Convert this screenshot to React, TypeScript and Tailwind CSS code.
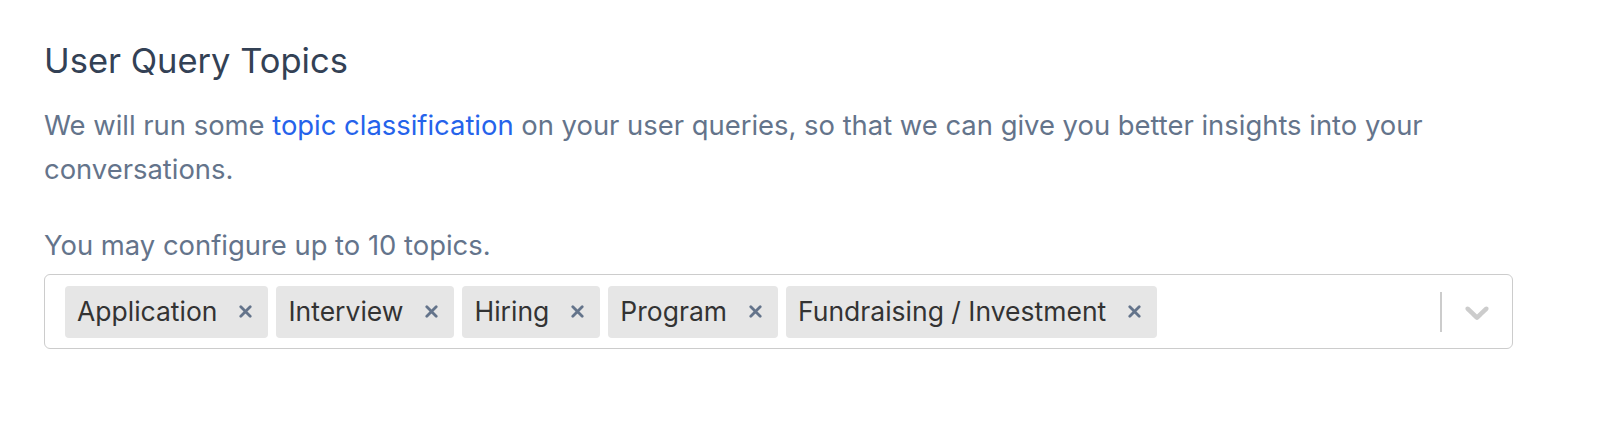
const topics = ['Application', 'Interview', 'Hiring', 'Program', 'Fundraising / Investment'];

function RemoveIcon() {
  return (
    <svg viewBox="0 0 13 13" className="h-[13px] w-[13px]" fill="none">
      <path d="M1.8 1.8L11.2 11.2M11.2 1.8L1.8 11.2" stroke="currentColor" strokeWidth="2.8" strokeLinecap="round" />
    </svg>
  );
}

function Chevron() {
  return (
    <svg viewBox="0 0 20 20" className="h-[40px] w-[40px] fill-current">
      <path d="M4.516 7.548c0.436-0.446 1.043-0.481 1.576 0l3.908 3.747 3.908-3.747c0.533-0.481 1.141-0.446 1.574 0 0.436 0.445 0.408 1.197 0 1.615-0.406 0.418-4.695 4.502-4.695 4.502-0.217 0.223-0.502 0.335-0.787 0.335s-0.57-0.112-0.789-0.335c0 0-4.287-4.084-4.695-4.502s-0.436-1.17 0-1.615z" />
    </svg>
  );
}

function TopicChip({ label }: { label: string }) {
  return (
    <div className="flex h-[52px] items-center rounded-[4px] bg-[#e6e6e6]">
      <span className="pl-[12px] pr-[10px] text-[26.5px] text-[#333333]">{label}</span>
      <span className="flex h-full items-center pl-[12px] pr-[16px] text-[#64748b]">
        <RemoveIcon />
      </span>
    </div>
  );
}

export default function App() {
  return (
    <div className="min-h-screen bg-white px-[44px] pt-[40px]" style={{ fontFamily: 'Inter, sans-serif' }}>
      <div className="w-[1469px]">
        <h2 className="text-[34.5px] leading-[42px] text-[#334155]">User Query Topics</h2>

        <p className="mt-[21px] text-[27.4px] leading-[44px] text-[#64748b]">
          We will run some <a className="text-[#2563eb]">topic classification</a> on your user queries, so that we
          can give you better insights into your conversations.
        </p>

        <p className="mt-[32px] text-[27.4px] leading-[44px] text-[#64748b]">You may configure up to 10 topics.</p>

        {/* topic select */}
        <div className="mt-[7px] flex h-[75px] items-center rounded-[6px] border-[1.5px] border-[#cccccc] bg-white">
          <div className="flex flex-1 flex-wrap items-center gap-[8px] pl-[20px]">
            {topics.map((t) => (
              <TopicChip key={t} label={t} />
            ))}
          </div>
          <div className="flex items-center">
            <span className="h-[40px] w-[2px] bg-[#cccccc]" />
            <span className="px-[15px] text-[#cccccc]">
              <Chevron />
            </span>
          </div>
        </div>
      </div>
    </div>
  );
}
